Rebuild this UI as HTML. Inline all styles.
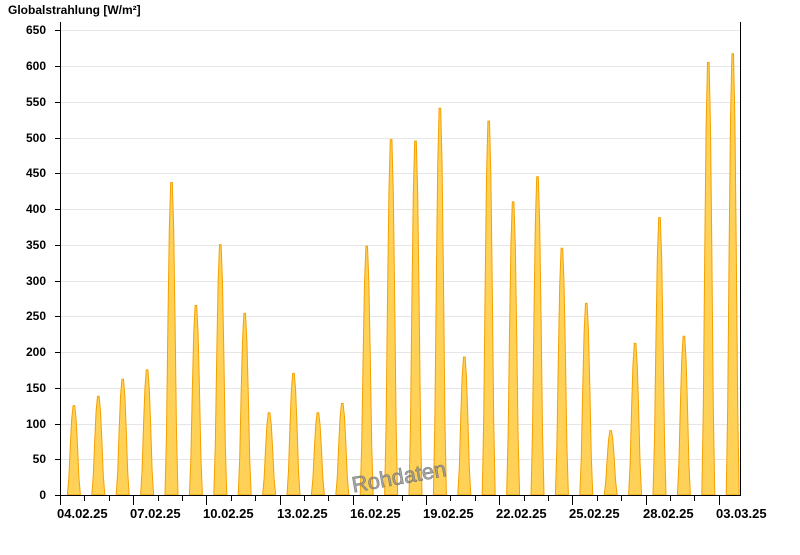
<!DOCTYPE html><html><head><meta charset="utf-8"><style>
body{margin:0;background:#fff;width:800px;height:550px;overflow:hidden}
svg text{font-family:"Liberation Sans",Arial,sans-serif;font-weight:bold;font-size:12px;fill:#000}
.xl text{font-size:13px}
</style></head><body>
<svg width="800" height="550" xmlns="http://www.w3.org/2000/svg">
<defs><path id="b" vector-effect="non-scaling-stroke" d="M-6.5,0 L-5,-0.2 L-3.6,-0.55 L-2.2,-0.85 L-0.8,-1 L0.8,-1 L2.2,-0.85 L3.6,-0.55 L5,-0.2 L6.5,0 Z" fill="#ffd257" stroke="#f5a000" stroke-width="1"/></defs>
<text x="8" y="14">Globalstrahlung [W/m²]</text>
<g stroke="#e6e6e6">
<line x1="61" x2="740" y1="30.5" y2="30.5"/><line x1="61" x2="740" y1="66.5" y2="66.5"/><line x1="61" x2="740" y1="102.5" y2="102.5"/><line x1="61" x2="740" y1="138.5" y2="138.5"/><line x1="61" x2="740" y1="173.5" y2="173.5"/><line x1="61" x2="740" y1="209.5" y2="209.5"/><line x1="61" x2="740" y1="245.5" y2="245.5"/><line x1="61" x2="740" y1="281.5" y2="281.5"/><line x1="61" x2="740" y1="316.5" y2="316.5"/><line x1="61" x2="740" y1="352.5" y2="352.5"/><line x1="61" x2="740" y1="388.5" y2="388.5"/><line x1="61" x2="740" y1="424.5" y2="424.5"/><line x1="61" x2="740" y1="459.5" y2="459.5"/>
</g>
<g>
<use href="#b" transform="translate(73.9,495) scale(1,89.4)"/>
<use href="#b" transform="translate(98.3,495) scale(1,98.7)"/>
<use href="#b" transform="translate(122.7,495) scale(1,115.8)"/>
<use href="#b" transform="translate(147.1,495) scale(1,125.1)"/>
<use href="#b" transform="translate(171.5,495) scale(1,312.5)"/>
<use href="#b" transform="translate(195.9,495) scale(1,189.5)"/>
<use href="#b" transform="translate(220.3,495) scale(1,250.2)"/>
<use href="#b" transform="translate(244.7,495) scale(1,181.6)"/>
<use href="#b" transform="translate(269.1,495) scale(1,82.2)"/>
<use href="#b" transform="translate(293.5,495) scale(1,121.6)"/>
<use href="#b" transform="translate(317.9,495) scale(1,82.2)"/>
<use href="#b" transform="translate(342.3,495) scale(1,91.5)"/>
<use href="#b" transform="translate(366.7,495) scale(1,248.8)"/>
<use href="#b" transform="translate(391.1,495) scale(1,355.4)"/>
<use href="#b" transform="translate(415.5,495) scale(1,353.9)"/>
<use href="#b" transform="translate(439.9,495) scale(1,386.8)"/>
<use href="#b" transform="translate(464.3,495) scale(1,138)"/>
<use href="#b" transform="translate(488.7,495) scale(1,373.9)"/>
<use href="#b" transform="translate(513.1,495) scale(1,293.1)"/>
<use href="#b" transform="translate(537.5,495) scale(1,318.2)"/>
<use href="#b" transform="translate(561.9,495) scale(1,246.7)"/>
<use href="#b" transform="translate(586.3,495) scale(1,191.6)"/>
<use href="#b" transform="translate(610.7,495) scale(1,64.4)"/>
<use href="#b" transform="translate(635.1,495) scale(1,151.6)"/>
<use href="#b" transform="translate(659.5,495) scale(1,277.4)"/>
<use href="#b" transform="translate(683.9,495) scale(1,158.7)"/>
<use href="#b" transform="translate(708.3,495) scale(1,432.6)"/>
<use href="#b" transform="translate(732.7,495) scale(1,441.2)"/>
</g>
<text x="350" y="484" transform="rotate(-10 400 470)" style="font-size:22px;font-weight:normal;fill:#999;stroke:#666;stroke-width:0.6;opacity:0.85">Rohdaten</text>
<line x1="60.5" y1="22" x2="60.5" y2="495" stroke="#000"/>
<line x1="740.5" y1="22" x2="740.5" y2="495" stroke="#000"/>
<line x1="60" y1="495.5" x2="741" y2="495.5" stroke="#000"/>
<g stroke="#000">
<line x1="55" x2="60" y1="30.5" y2="30.5"/><line x1="55" x2="60" y1="66.5" y2="66.5"/><line x1="55" x2="60" y1="102.5" y2="102.5"/><line x1="55" x2="60" y1="138.5" y2="138.5"/><line x1="55" x2="60" y1="173.5" y2="173.5"/><line x1="55" x2="60" y1="209.5" y2="209.5"/><line x1="55" x2="60" y1="245.5" y2="245.5"/><line x1="55" x2="60" y1="281.5" y2="281.5"/><line x1="55" x2="60" y1="316.5" y2="316.5"/><line x1="55" x2="60" y1="352.5" y2="352.5"/><line x1="55" x2="60" y1="388.5" y2="388.5"/><line x1="55" x2="60" y1="424.5" y2="424.5"/><line x1="55" x2="60" y1="459.5" y2="459.5"/><line x1="55" x2="60" y1="495.5" y2="495.5"/>
<line x1="60.5" x2="60.5" y1="496" y2="505"/><line x1="84.5" x2="84.5" y1="496" y2="501"/><line x1="109.5" x2="109.5" y1="496" y2="501"/><line x1="133.5" x2="133.5" y1="496" y2="505"/><line x1="158.5" x2="158.5" y1="496" y2="501"/><line x1="182.5" x2="182.5" y1="496" y2="501"/><line x1="206.5" x2="206.5" y1="496" y2="505"/><line x1="231.5" x2="231.5" y1="496" y2="501"/><line x1="255.5" x2="255.5" y1="496" y2="501"/><line x1="280.5" x2="280.5" y1="496" y2="505"/><line x1="304.5" x2="304.5" y1="496" y2="501"/><line x1="328.5" x2="328.5" y1="496" y2="501"/><line x1="353.5" x2="353.5" y1="496" y2="505"/><line x1="377.5" x2="377.5" y1="496" y2="501"/><line x1="402.5" x2="402.5" y1="496" y2="501"/><line x1="426.5" x2="426.5" y1="496" y2="505"/><line x1="450.5" x2="450.5" y1="496" y2="501"/><line x1="475.5" x2="475.5" y1="496" y2="501"/><line x1="499.5" x2="499.5" y1="496" y2="505"/><line x1="524.5" x2="524.5" y1="496" y2="501"/><line x1="548.5" x2="548.5" y1="496" y2="501"/><line x1="572.5" x2="572.5" y1="496" y2="505"/><line x1="597.5" x2="597.5" y1="496" y2="501"/><line x1="621.5" x2="621.5" y1="496" y2="501"/><line x1="646.5" x2="646.5" y1="496" y2="505"/><line x1="670.5" x2="670.5" y1="496" y2="501"/><line x1="694.5" x2="694.5" y1="496" y2="501"/><line x1="719.5" x2="719.5" y1="496" y2="505"/>
</g>
<g text-anchor="end">
<text x="46" y="34">650</text><text x="46" y="70">600</text><text x="46" y="106">550</text><text x="46" y="142">500</text><text x="46" y="177">450</text><text x="46" y="213">400</text><text x="46" y="249">350</text><text x="46" y="285">300</text><text x="46" y="320">250</text><text x="46" y="356">200</text><text x="46" y="392">150</text><text x="46" y="428">100</text><text x="46" y="463">50</text><text x="46" y="499">0</text>
</g>
<g class="xl">
<text x="57" y="518">04.02.25</text><text x="130" y="518">07.02.25</text><text x="203" y="518">10.02.25</text><text x="277" y="518">13.02.25</text><text x="350" y="518">16.02.25</text><text x="423" y="518">19.02.25</text><text x="496" y="518">22.02.25</text><text x="569" y="518">25.02.25</text><text x="643" y="518">28.02.25</text><text x="716" y="518">03.03.25</text>
</g>
</svg>
</body></html>
